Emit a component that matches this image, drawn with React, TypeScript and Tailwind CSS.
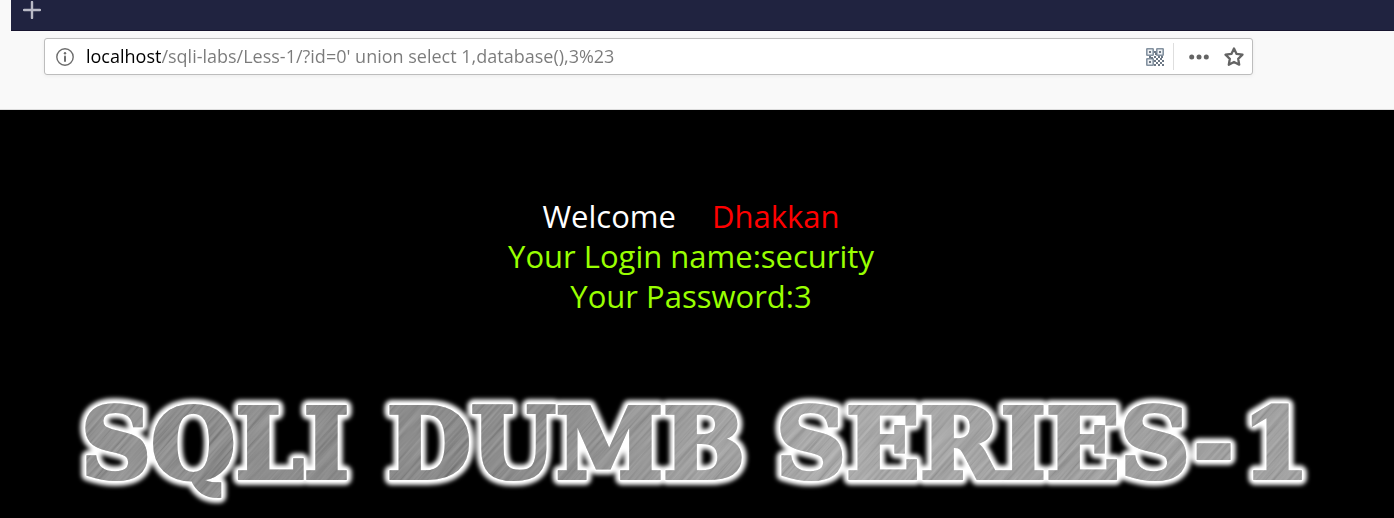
import React, { useState } from 'react';

const URL_TEXT = "localhost/sqli-labs/Less-1/?id=0' union select 1,database(),3%23";

interface Word {
  text: string;
  x: number;
}

const BANNER_WORDS: Word[] = [
  { text: 'SQLI', x: 20 },
  { text: 'DUMB', x: 326 },
  { text: 'SERIES-', x: 715 },
  { text: '1', x: 1181 },
];

// Dark modules of the checkered corner of the QR icon, on an 18x18 grid
const QR_DOTS = [
  [8, 3], [9, 5], [8, 8], [3, 8], [5, 9], [12, 8], [15, 8],
  [10, 10], [14, 10], [8, 12], [12, 12], [16, 12],
  [10, 14], [14, 14], [8, 16], [12, 16], [16, 16],
];

function InfoIcon() {
  return (
    <svg width="18" height="18" viewBox="0 0 18 18" aria-hidden="true">
      <circle cx="9" cy="9" r="8.2" fill="none" stroke="#6d6d6d" strokeWidth="1.4" />
      <circle cx="9" cy="5.2" r="1.2" fill="#6d6d6d" />
      <path d="M9 8.5V13" stroke="#6d6d6d" strokeWidth="2" strokeLinecap="round" />
    </svg>
  );
}

function QrIcon() {
  return (
    <svg width="18" height="18" viewBox="0 0 18 18" fill="#6c7784" aria-hidden="true">
      {[[0, 0], [10, 0], [0, 10]].map(([x, y]) => (
        <g key={`${x}-${y}`}>
          <rect x={x + 0.8} y={y + 0.8} width="6.4" height="6.4" rx="0.5" fill="#eef1f4" stroke="#8492a0" strokeWidth="1.6" />
          <rect x={x + 3} y={y + 3} width="2" height="2" />
        </g>
      ))}
      {QR_DOTS.map(([x, y]) => (
        <rect key={`${x}-${y}`} x={x} y={y} width="2" height="2" />
      ))}
    </svg>
  );
}

function DotsIcon() {
  return (
    <svg width="20" height="6" viewBox="0 0 20 6" fill="#646464" aria-hidden="true">
      <circle cx="2.7" cy="3" r="2.5" />
      <circle cx="10" cy="3" r="2.5" />
      <circle cx="17.3" cy="3" r="2.5" />
    </svg>
  );
}

function StarIcon() {
  return (
    <svg width="20" height="20" viewBox="0 0 20 20" aria-hidden="true">
      <path
        d="M10 1.5l2.6 5.4 5.9.8-4.3 4.1 1 5.9L10 14.9l-5.2 2.8 1-5.9L1.5 7.7l5.9-.8z"
        fill="none"
        stroke="#646464"
        strokeWidth="2.3"
        strokeLinejoin="round"
      />
    </svg>
  );
}

function BannerWords() {
  return (
    <>
      {BANNER_WORDS.map(word => (
        <tspan key={word.text} x={word.x} y={98}>{word.text}</tspan>
      ))}
    </>
  );
}

function Banner() {
  return (
    <svg
      viewBox="0 0 1260 130"
      className="block w-full max-w-[1260px] font-['DejaVu_Serif',serif] text-[97px] font-bold"
      role="img"
      aria-label="SQLI DUMB SERIES-1"
    >
      <defs>
        <linearGradient id="steel" x1="0" y1="0" x2="1260" y2="0" gradientUnits="userSpaceOnUse">
          <stop offset="0" stopColor="#858585" />
          <stop offset="0.25" stopColor="#747474" />
          <stop offset="0.4" stopColor="#7c7c7c" />
          <stop offset="0.52" stopColor="#969696" />
          <stop offset="0.62" stopColor="#a2a2a2" />
          <stop offset="0.8" stopColor="#929292" />
          <stop offset="1" stopColor="#969696" />
        </linearGradient>
        <filter id="glow" x="-5%" y="-30%" width="110%" height="160%">
          <feGaussianBlur stdDeviation="2" />
        </filter>
        {/* long thin noise, turned 45 degrees for the brushed metal */}
        <filter id="brushed" x="0" y="0" width="100%" height="100%">
          <feTurbulence type="fractalNoise" baseFrequency="0.012 0.35" numOctaves="3" seed="4" />
          <feColorMatrix values="1 0 0 0 0  1 0 0 0 0  1 0 0 0 0  0 0 0 0 0.3" />
        </filter>
        <mask id="letters" maskUnits="userSpaceOnUse" x="0" y="0" width="1260" height="130">
          <text fill="#fff" stroke="#fff" strokeWidth="4"><BannerWords /></text>
        </mask>
      </defs>
      <text fill="#fff" stroke="#fff" strokeWidth="14" strokeLinejoin="round" filter="url(#glow)">
        <BannerWords />
      </text>
      <text fill="#fff" stroke="#fff" strokeWidth="7" strokeLinejoin="round">
        <BannerWords />
      </text>
      <text fill="url(#steel)" stroke="url(#steel)" strokeWidth="4">
        <BannerWords />
      </text>
      <g mask="url(#letters)">
        <rect x="-100" y="-700" width="1500" height="1500" transform="rotate(-48 630 65)" filter="url(#brushed)" />
      </g>
    </svg>
  );
}

export default function App() {
  const [url, setUrl] = useState(URL_TEXT);

  return (
    <div className="flex min-h-screen flex-col bg-black font-['Open_Sans','Noto_Sans',sans-serif]">
      <header className="border-b border-[#dcdcdc] bg-[#f9f9f9] pb-[34px]">
        <div className="ml-[11px] flex h-[31px] items-start border-b border-[#17152f] bg-[#202340] pl-3">
          <button type="button" aria-label="New tab" className="pt-px">
            <svg width="18" height="18" viewBox="0 0 18 18" aria-hidden="true">
              <path d="M9 1v16M1 9h16" stroke="#b9bac6" strokeWidth="2.4" strokeLinecap="round" />
            </svg>
          </button>
        </div>

        <form
          onSubmit={e => e.preventDefault()}
          className="mt-[7px] mr-[141px] ml-11 flex h-[37px] items-center rounded-[3px] border border-[#bdbdbd] bg-white pr-2 pl-[11px] shadow-[0_1px_4px_rgba(0,0,0,0.06)]"
        >
          <button type="button" aria-label="Site information">
            <InfoIcon />
          </button>
          <input
            type="text"
            aria-label="Address"
            spellCheck={false}
            value={url}
            onChange={e => setUrl(e.target.value)}
            className="ml-3 h-7 min-w-0 flex-1 bg-[linear-gradient(90deg,#000_75px,#7a7a7a_75px)] bg-clip-text pb-0.5 text-lg text-transparent caret-black outline-none"
          />
          <button type="button" aria-label="QR code" className="pr-[9px]">
            <QrIcon />
          </button>
          <div className="flex h-[27px] items-center gap-[15px] border-l border-[#dedede] pl-[15px]">
            <button type="button" aria-label="Page actions">
              <DotsIcon />
            </button>
            <button type="button" aria-label="Bookmark this page">
              <StarIcon />
            </button>
          </div>
        </form>
      </header>

      <main className="flex flex-col items-center pt-[86px] pr-3">
        <div className="text-center text-[31px] leading-10 text-[#99ff00]">
          <h1 className="flex justify-center gap-9 text-white">
            Welcome <span className="text-[#ff0000]">Dhakkan</span>
          </h1>
          <p>Your Login name:security</p>
          <p>Your Password:3</p>
        </div>
        <div className="mt-16 flex w-full justify-center">
          <Banner />
        </div>
      </main>
    </div>
  );
}
